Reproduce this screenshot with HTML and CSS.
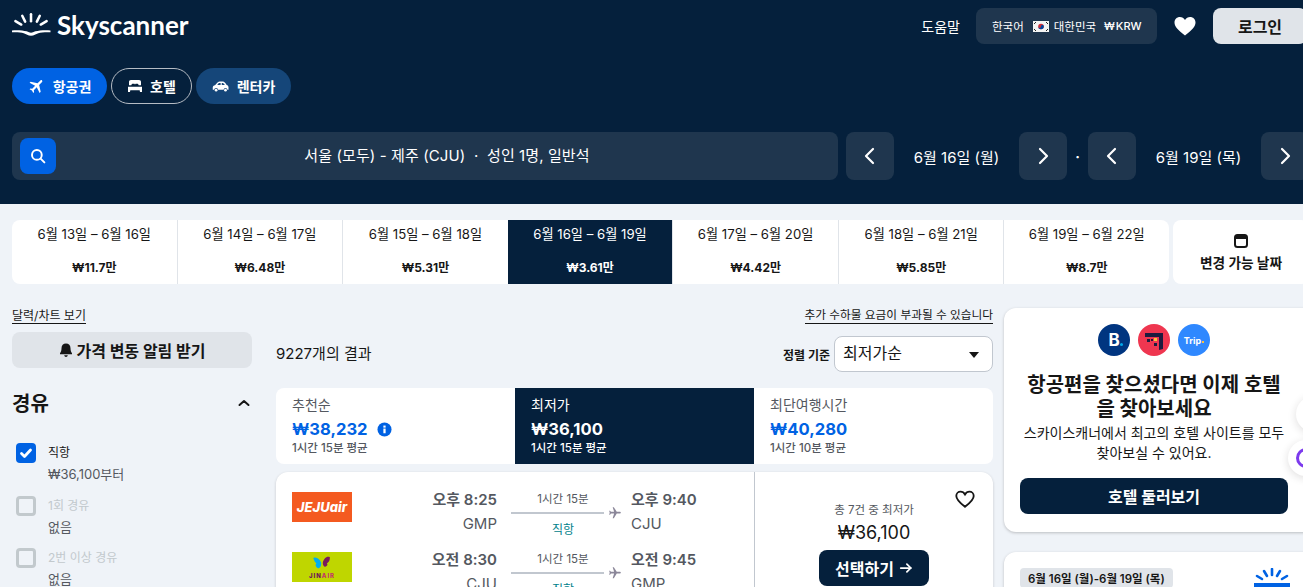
FILE: index.html
```html
<!DOCTYPE html>
<html lang="ko">
<head>
  <meta charset="UTF-8">
  <title>Skyscanner</title>
  <link rel="stylesheet" href="styles.css">
</head>
<body>

  <header class="topbar">
    <div class="toprow">
      <a class="logo" href="#">
        <svg class="logo-mark" viewBox="0 0 40 28" width="39" height="28">
          <g fill="none" stroke="#fff" stroke-width="2.6" stroke-linecap="round">
            <path d="M19.5 2v7"/>
            <path d="M10.500 3.500l3 6"/>
            <path d="M28.500 3.500l-3 6"/>
            <path d="M3.500 9l6 3.500"/>
            <path d="M35.500 9l-6 3.500"/>
          </g>
          <path fill="#fff" d="M0 18.500c6-.4 11.500 0 15 1 2 .6 3 1.500 4.500 1.500s2.500-.9 4.500-1.500c3.500-1 9-1.400 15.500-1V20.500c-5.500-.2-10 .2-12.500 1-2.500.8-4.500 2.500-7.500 2.500s-5-1.700-7.500-2.500c-2.500-.8-6.500-1.200-12-1z"/>
        </svg>
        <span>Skyscanner</span>
      </a>
      <div class="top-actions">
        <a class="help" href="#">도움말</a>
        <button class="locale">
          <span>한국어</span>
          <svg class="flag" viewBox="0 0 16 11" width="16" height="11">
            <rect width="16" height="11" fill="#f4f4f4"/>
            <circle cx="8" cy="5.5" r="2.8" fill="#cd2e3a"/>
            <path d="M5.2 5.500a2.800 2.800 0 0 0 5.600 0 1.400 1.400 0 0 0-2.800 0 1.400 1.400 0 0 1-2.800 0z" fill="#0047a0"/>
            <g stroke="#222" stroke-width="1">
              <path d="M1 3l2-2"/><path d="M13 1l2 2"/><path d="M1 8l2 2"/><path d="M13 10l2-2"/>
            </g>
          </svg>
          <span>대한민국</span>
          <span class="currency">₩ KRW</span>
        </button>
        <svg class="top-heart" viewBox="0 0 24 24" width="24" height="24">
          <path fill="#fff" d="M12 21.500C5 16 1.500 12.700 1.500 8.500 1.500 5.200 4 3 6.900 3c2.100 0 4 1.100 5.100 3 1.100-1.900 3-3 5.100-3 2.900 0 5.400 2.200 5.400 5.500 0 4.200-3.500 7.500-10.500 13z"/>
        </svg>
        <button class="login">로그인</button>
      </div>
    </div>

    <nav class="modes">
      <a class="mode mode-flight" href="#">
        <svg viewBox="0 0 24 24" width="18" height="18"><path class="plane-up" fill="#fff" d="M21 16v-2l-8-5V3.500C13 2.670 12.330 2 11.500 2S10 2.670 10 3.500V9l-8 5v2l8-2.500V19l-2 1.500V22l3.500-1 3.500 1v-1.500L13 19v-5.500l8 2.500z"/></svg>
        항공권
      </a>
      <a class="mode mode-hotel" href="#">
        <svg viewBox="0 0 24 24" width="16" height="16"><path fill="#fff" d="M6 3h12c2 0 3 1.200 3 3v5h-3.500c0-1.500-1-2.500-2.500-2.500h-1.500c-.8 0-1.500.8-1.500 2h0c0-1.200-.7-2-1.500-2H9c-1.500 0-2.500 1-2.500 2.500H3V6c0-1.800 1-3 3-3zM1.500 13h21v8h-3l-.5-2.500H5L4.500 21h-3z"/></svg>
        호텔
      </a>
      <a class="mode mode-car" href="#">
        <svg viewBox="0 0 24 24" width="18" height="18"><path fill="#fff" fill-rule="evenodd" d="M1 17v-3c0-1.500 1-2.500 3-3l3-3.500C8 6.500 9.500 6 11.500 6h2c2 0 3.500.7 5 3l1 1.500c1.500.5 2.500 1.500 2.500 3V17h-1.500a2.500 2.500 0 0 0-5 0H8a2.500 2.500 0 0 0-5 0zM8.500 8.500L7 10.500h4.500V8h-1c-1 0-1.500.1-2 .5zM13 8v2.500h4C16.200 8.900 15 8 13 8z"/><circle cx="5.500" cy="17.500" r="1.800" fill="#fff"/><circle cx="18" cy="17.500" r="1.800" fill="#fff"/></svg>
        렌터카
      </a>
    </nav>

    <div class="searchrow">
      <div class="searchbox">
        <span class="searchbtn">
          <svg viewBox="0 0 24 24" width="18" height="18" fill="none" stroke="#fff" stroke-width="2.6" stroke-linecap="round"><circle cx="10.5" cy="10.5" r="6.5"/><path d="M15.500 15.500l5 5"/></svg>
        </span>
        <span class="searchtext">서울 (모두) - 제주 (CJU) &nbsp;·&nbsp; 성인 1명, 일반석</span>
      </div>
      <button class="arrowbtn"><svg viewBox="0 0 24 24" width="24" height="24"><path d="M15 5l-7 7 7 7"/></svg></button>
      <span class="datelabel">6월 16일 (월)</span>
      <button class="arrowbtn"><svg viewBox="0 0 24 24" width="24" height="24"><path d="M9 5l7 7-7 7"/></svg></button>
      <span class="datedot">·</span>
      <button class="arrowbtn"><svg viewBox="0 0 24 24" width="24" height="24"><path d="M15 5l-7 7 7 7"/></svg></button>
      <span class="datelabel">6월 19일 (목)</span>
      <button class="arrowbtn"><svg viewBox="0 0 24 24" width="24" height="24"><path d="M9 5l7 7-7 7"/></svg></button>
    </div>
  </header>

  <section class="datestrip">
    <div class="datecells">
      <a class="datecell" href="#"><span>6월 13일 – 6월 16일</span><b>₩11.7만</b></a>
      <a class="datecell" href="#"><span>6월 14일 – 6월 17일</span><b>₩6.48만</b></a>
      <a class="datecell" href="#"><span>6월 15일 – 6월 18일</span><b>₩5.31만</b></a>
      <a class="datecell active" href="#"><span>6월 16일 – 6월 19일</span><b>₩3.61만</b></a>
      <a class="datecell" href="#"><span>6월 17일 – 6월 20일</span><b>₩4.42만</b></a>
      <a class="datecell" href="#"><span>6월 18일 – 6월 21일</span><b>₩5.85만</b></a>
      <a class="datecell" href="#"><span>6월 19일 – 6월 22일</span><b>₩8.7만</b></a>
    </div>
    <a class="flexdates" href="#">
      <svg viewBox="0 0 16 16" width="16" height="16"><rect x="2" y="2" width="12" height="12" rx="2.5" fill="none" stroke="#161616" stroke-width="2"/><rect x="2" y="2" width="12" height="4" fill="#161616"/></svg>
      <span>변경 가능 날짜</span>
    </a>
  </section>

  <main class="results">
    <aside class="filters">
      <a class="underlined" href="#">달력/차트 보기</a>
      <button class="alertbtn">
        <svg viewBox="0 0 16 16" width="16" height="16"><path fill="#161616" d="M8 1.500c2.800 0 4.500 2 4.500 4.700 0 2.300.6 3.700 1.500 5v1H2v-1c.9-1.300 1.500-2.700 1.500-5C3.500 3.500 5.200 1.500 8 1.500zM6.200 13.300h3.600C9.600 14.300 8.900 15 8 15s-1.600-.7-1.800-1.700z"/></svg>
        가격 변동 알림 받기
      </button>
      <div class="filter-head">
        <h3>경유</h3>
        <svg viewBox="0 0 16 16" width="16" height="16" fill="none" stroke="#161616" stroke-width="2" stroke-linecap="round" stroke-linejoin="round"><path d="M3.500 10L8 6l4.500 4"/></svg>
      </div>
      <div class="stop">
        <span class="check checked">
          <svg viewBox="0 0 20 20" width="20" height="20" fill="none" stroke="#fff" stroke-width="2.8" stroke-linecap="round" stroke-linejoin="round"><path d="M5.500 10.500l3 3 6-6.500"/></svg>
        </span>
        <div><p class="stop-name">직항</p><p class="stop-price">₩36,100부터</p></div>
      </div>
      <div class="stop">
        <span class="check"></span>
        <div><p class="stop-name off">1회 경유</p><p class="stop-price">없음</p></div>
      </div>
      <div class="stop">
        <span class="check"></span>
        <div><p class="stop-name off">2번 이상 경유</p><p class="stop-price">없음</p></div>
      </div>
    </aside>

    <section class="list">
      <div class="list-note"><a class="underlined note-link" href="#">추가 수하물 요금이 부과될 수 있습니다</a></div>
      <div class="list-head">
        <span class="count">9227개의 결과</span>
        <div class="sort">
          <label>정렬 기준</label>
          <div class="select">최저가순<i class="caret"></i></div>
        </div>
      </div>

      <div class="sorttabs">
        <div class="sorttab">
          <span class="st-label">추천순</span>
          <span class="st-price">₩38,232
            <svg viewBox="0 0 16 16" width="15" height="15"><circle cx="8" cy="8" r="7.5" fill="#0062e3"/><rect x="6.8" y="7" width="2.4" height="5" fill="#fff"/><rect x="6.8" y="3.800" width="2.4" height="2.200" fill="#fff"/></svg>
          </span>
          <span class="st-time">1시간 15분 평균</span>
        </div>
        <div class="sorttab active">
          <span class="st-label">최저가</span>
          <span class="st-price">₩36,100</span>
          <span class="st-time">1시간 15분 평균</span>
        </div>
        <div class="sorttab">
          <span class="st-label">최단여행시간</span>
          <span class="st-price">₩40,280</span>
          <span class="st-time">1시간 10분 평균</span>
        </div>
      </div>

      <article class="ticket">
        <div class="legs">
          <div class="leg">
            <div class="airline jeju">JEJUair</div>
            <div class="time-from"><b>오후 8:25</b><span>GMP</span></div>
            <div class="route">
              <span class="dur">1시간 15분</span>
              <div class="line"><i></i><svg viewBox="0 0 24 24" width="14" height="14"><path transform="rotate(90 12 12)" d="M21 16v-2l-8-5V3.500C13 2.670 12.330 2 11.500 2S10 2.670 10 3.500V9l-8 5v2l8-2.500V19l-2 1.500V22l3.500-1 3.500 1v-1.500L13 19v-5.500l8 2.500z"/></svg></div>
              <span class="direct">직항</span>
            </div>
            <div class="time-to"><b>오후 9:40</b><span>CJU</span></div>
          </div>
          <div class="leg">
            <div class="airline jin">
              <svg viewBox="0 0 30 24" width="24" height="19">
                <path fill="#00aeef" d="M14 11C12 6 8 3 4 5c1 4 3 6 4 7-2 1-1 5 2 6 3 0 4-3 4-7z"/>
                <path fill="#7a1a5e" d="M16 11c1-5 5-9 9-7 0 4-1 6-4 8 2 1 0 4-2 4-2 0-3-2-3-5z"/>
              </svg>
              <span>JIN<em>AIR</em></span>
            </div>
            <div class="time-from"><b>오전 8:30</b><span>CJU</span></div>
            <div class="route">
              <span class="dur">1시간 15분</span>
              <div class="line"><i></i><svg viewBox="0 0 24 24" width="14" height="14"><path transform="rotate(90 12 12)" d="M21 16v-2l-8-5V3.500C13 2.670 12.330 2 11.500 2S10 2.670 10 3.500V9l-8 5v2l8-2.500V19l-2 1.500V22l3.500-1 3.500 1v-1.500L13 19v-5.500l8 2.500z"/></svg></div>
              <span class="direct">직항</span>
            </div>
            <div class="time-to"><b>오전 9:45</b><span>GMP</span></div>
          </div>
        </div>
        <div class="buy">
          <svg class="buy-heart" viewBox="0 0 24 24" width="22" height="22"><path fill="none" stroke="#161616" stroke-width="2" d="M12 20.500C5.500 15.500 2.500 12.500 2.500 8.700 2.500 5.800 4.700 4 7.100 4c2 0 3.800 1.100 4.900 3 1.100-1.900 2.900-3 4.900-3 2.400 0 4.600 1.800 4.600 4.700 0 3.800-3 6.800-9.500 11.800z"/></svg>
          <span class="buy-note">총 7건 중 최저가</span>
          <span class="buy-price">₩36,100</span>
          <button class="select-btn">선택하기
            <svg viewBox="0 0 16 16" width="14" height="14" fill="none" stroke="#fff" stroke-width="2" stroke-linecap="round" stroke-linejoin="round"><path d="M2 8h11.500"/><path d="M9 3.500L13.500 8 9 12.500"/></svg>
          </button>
        </div>
      </article>
    </section>

    <aside class="side">
      <div class="promo">
        <div class="partners">
          <span class="partner booking">B<i></i></span>
          <span class="partner agoda">
            <svg viewBox="0 0 32 32" width="32" height="32">
              <path fill="#1d1b3f" d="M7 9h18v16l-4 1V13H7z"/>
              <rect x="9" y="15" width="3" height="3" fill="#1d1b3f"/>
              <rect x="13" y="15" width="2" height="2" fill="#1d1b3f"/>
              <rect x="16" y="14" width="3" height="3" fill="#f9c23c"/>
              <rect x="16" y="19" width="3" height="3" fill="#1d1b3f"/>
            </svg>
          </span>
          <span class="partner trip">Trip<i></i></span>
        </div>
        <h2>항공편을 찾으셨다면 이제 호텔을 찾아보세요</h2>
        <p>스카이스캐너에서 최고의 호텔 사이트를 모두 찾아보실 수 있어요.</p>
        <button class="promo-btn">호텔 둘러보기</button>
      </div>
      <div class="hotel-card">
        <span class="date-tag">6월 16일 (월)-6월 19일 (목)</span>
        <svg class="sun" viewBox="0 0 36 24" width="36" height="24">
          <g fill="none" stroke="#0062e3" stroke-width="2.6" stroke-linecap="round">
            <path d="M18 1v6"/><path d="M10 3l3 5"/><path d="M26 3l-3 5"/><path d="M3 8l5 3"/><path d="M33 8l-5 3"/>
          </g>
          <path fill="#0062e3" d="M0 15h36v9H0z"/>
        </svg>
      </div>
    </aside>
  </main>

  <span class="float-btn float-top"></span>
  <span class="float-btn float-ai"><i></i></span>

</body>
</html>
```

FILE: styles.css
```css
* {
  box-sizing: border-box;
}

html, body {
  height: 587px;
  overflow: hidden;
}

body {
  margin: 0;
  width: 1303px;
  position: relative;
  font-family: Inter, "Noto Sans CJK KR", sans-serif;
  background: #eff3f8;
  color: #161616;
  font-size: 14px;
}

a {
  color: inherit;
  text-decoration: none;
}

button {
  font-family: inherit;
  border: none;
  cursor: pointer;
}

p, h2, h3 {
  margin: 0;
}

/* header */
.topbar {
  height: 204px;
  background: #05203c;
  color: #fff;
  padding: 8px 0 0 12px;
}

.toprow {
  display: flex;
  justify-content: space-between;
  align-items: flex-start;
  height: 60px;
}

.logo {
  display: flex;
  align-items: center;
  gap: 6px;
  height: 36px;
  font-family: Lato, sans-serif;
  font-size: 26px;
  font-weight: 700;
}

.logo span {
  margin-top: -2px;
}

.top-actions {
  display: flex;
  align-items: center;
  height: 36px;
  margin-right: -4px;
}

.help {
  margin-right: 16px;
}

.locale {
  display: flex;
  align-items: center;
  flex: none;
  height: 36px;
  width: 181px;
  padding: 0 16px;
  border-radius: 8px;
  background: #1f364e;
  color: #fff;
  font-size: 11.5px;
  white-space: nowrap;
}

.flag {
  flex: none;
  margin: 0 5px 0 9px;
}

.currency {
  margin-left: 8px;
  font-size: 11px;
  font-weight: 500;
  word-spacing: -2px;
}

.top-heart {
  flex: none;
  margin: 0 16px;
}

.login {
  flex: none;
  width: 94px;
  height: 36px;
  border-radius: 8px;
  background: #e0e4e9;
  color: #161616;
  font-size: 16px;
  font-weight: 700;
}

.modes {
  display: flex;
  gap: 4px;
  height: 36px;
}

.mode {
  display: flex;
  align-items: center;
  justify-content: center;
  gap: 7px;
  border-radius: 18px;
  font-weight: 700;
}

.mode-flight {
  width: 95px;
  background: #0062e3;
}

.plane-up {
  transform: rotate(45deg);
  transform-origin: center;
}

.mode-hotel {
  width: 81px;
  border: 1px solid #b6bcc4;
}

.mode-car {
  width: 95px;
  background: #154679;
}

.searchrow {
  display: flex;
  align-items: center;
  margin-top: 28px;
  width: 1300px;
}

.searchbox {
  position: relative;
  display: flex;
  align-items: center;
  justify-content: center;
  flex: none;
  width: 826px;
  height: 48px;
  margin-right: 8px;
  padding: 0 0 4px 44px;
  border-radius: 8px;
  background: #1f364e;
  font-size: 15px;
  letter-spacing: 0.1px;
}

.searchbtn {
  position: absolute;
  left: 8px;
  top: 6px;
  display: flex;
  align-items: center;
  justify-content: center;
  width: 36px;
  height: 36px;
  border-radius: 8px;
  background: #0062e3;
}

.arrowbtn {
  display: flex;
  align-items: center;
  justify-content: center;
  flex: none;
  width: 48px;
  height: 48px;
  padding: 0;
  border-radius: 8px;
  background: #1f364e;
}

.arrowbtn path {
  fill: none;
  stroke: #fff;
  stroke-width: 2.2;
  stroke-linecap: round;
  stroke-linejoin: round;
}

.datelabel {
  flex: none;
  width: 125px;
  text-align: center;
  font-size: 15px;
}

.datedot {
  flex: none;
  width: 21px;
  text-align: center;
  font-weight: 700;
}

/* date strip */
.datestrip {
  display: flex;
  gap: 4px;
  margin: 16px 0 0 12px;
  height: 64px;
}

.datecells {
  display: flex;
  flex: none;
  width: 1157px;
  border-radius: 8px;
  background: #fff;
  overflow: hidden;
}

.datecell {
  flex: 1;
  display: flex;
  flex-direction: column;
  align-items: center;
  justify-content: space-between;
  padding: 4px 0 9px;
  border-left: 1px solid #e0e4e9;
  font-size: 13.2px;
}

.datecell:first-child {
  border-left: none;
}

.datecell.active {
  background: #05203c;
  color: #fff;
  border-left: none;
}

.datecell b {
  font-size: 12px;
}

.flexdates {
  display: flex;
  flex-direction: column;
  align-items: center;
  justify-content: center;
  gap: 3px;
  flex: none;
  width: 136px;
  border-radius: 8px;
  background: #fff;
  font-weight: 700;
  font-size: 13.7px;
}

/* results */
.results {
  display: grid;
  grid-template-columns: 240px 741px 320px;
  margin: 24px 0 0 12px;
}

.underlined {
  display: block;
  width: fit-content;
  font-size: 12px;
  line-height: 15px;
  border-bottom: 1px solid #161616;
}

.note-link {
  margin-left: auto;
  font-size: 11.7px;
}

.alertbtn {
  display: flex;
  align-items: center;
  justify-content: center;
  gap: 2px;
  width: 240px;
  height: 36px;
  margin-top: 8px;
  border-radius: 8px;
  background: #e0e4e9;
  color: #161616;
  font-size: 16px;
  font-weight: 700;
}

.filter-head {
  display: flex;
  justify-content: space-between;
  align-items: center;
  margin: 20px 0 26px;
}

.filter-head h3 {
  font-size: 20px;
  font-weight: 700;
}

.stop {
  display: flex;
  gap: 12px;
  height: 52.5px;
  padding-left: 4px;
}

.check {
  flex: none;
  width: 20px;
  height: 20px;
  border: 3px solid #c2c9cd;
  border-radius: 4px;
}

.check.checked {
  border: none;
  background: #0062e3;
}

.stop-name {
  font-size: 12px;
  line-height: 20px;
}

.stop-name.off {
  color: #c2c9cd;
}

.stop-price {
  margin-top: 1px;
  font-size: 13px;
  line-height: 20px;
  color: #545860;
}

.list {
  margin-left: 24px;
  width: 717px;
}

.list-note {
  height: 24px;
}

.list-head {
  display: flex;
  justify-content: space-between;
  align-items: center;
  margin-top: 4px;
  height: 36px;
}

.count {
  margin-top: -3px;
  font-size: 15px;
}

.sort {
  display: flex;
  align-items: center;
  gap: 4px;
}

.sort label {
  font-size: 12px;
  font-weight: 700;
}

.select {
  position: relative;
  width: 159px;
  height: 36px;
  padding: 3px 8px;
  border: 1px solid #c1c7cf;
  border-radius: 8px;
  background: #fff;
  font-size: 16px;
}

.caret {
  position: absolute;
  right: 13px;
  top: 15px;
  border: 5px solid transparent;
  border-top: 6px solid #161616;
  border-bottom: none;
}

.sorttabs {
  display: grid;
  grid-template-columns: repeat(3, 1fr);
  margin-top: 16px;
  height: 76px;
  border-radius: 8px;
  background: #fff;
  overflow: hidden;
}

.sorttab {
  display: flex;
  flex-direction: column;
  padding: 7px 16px;
}

.sorttab.active {
  background: #05203c;
  color: #fff;
}

.st-label {
  margin-bottom: 4px;
  color: #545860;
  font-size: 14px;
  line-height: 19px;
}

.st-price {
  display: flex;
  align-items: center;
  gap: 9px;
  color: #0062e3;
  font-size: 16.6px;
  font-weight: 700;
  line-height: 22px;
}

.st-time {
  color: #545860;
  font-size: 11.5px;
  font-weight: 500;
  line-height: 16px;
}

.sorttab.active .st-label,
.sorttab.active .st-price,
.sorttab.active .st-time {
  color: #fff;
}

.ticket {
  display: flex;
  height: 200px;
  margin-top: 8px;
  border-radius: 12px;
  background: #fff;
  box-shadow: 0 1px 3px rgba(37, 32, 31, 0.2);
}

.legs {
  width: 478px;
  padding: 18px 16px 0;
}

.leg {
  display: grid;
  grid-template-columns: 60px 145px 134px 1fr;
  height: 60px;
}

.airline {
  width: 60px;
  height: 30px;
  margin-top: 2px;
}

.jeju {
  background: #f45a20;
  color: #fff;
  font-size: 13px;
  font-weight: 800;
  font-style: italic;
  line-height: 30px;
  text-align: center;
}

.jin {
  display: flex;
  flex-direction: column;
  align-items: center;
  background: #bfd600;
  color: #6d1559;
  font-size: 6px;
  font-weight: 800;
  line-height: 7px;
  letter-spacing: 1px;
}

.jin svg {
  margin-top: 2px;
  margin-bottom: -1px;
}

.jin em {
  color: #c2356a;
  font-style: normal;
}

.time-from, .time-to {
  display: flex;
  flex-direction: column;
  padding-top: 1px;
  color: #545860;
}

.time-from {
  align-items: flex-end;
}

.time-from b, .time-to b {
  font-size: 15px;
  font-weight: 600;
  line-height: 18px;
}

.time-from span, .time-to span {
  margin-top: 3px;
  font-size: 15px;
  line-height: 24px;
}

.route {
  display: flex;
  flex-direction: column;
  align-items: center;
  padding: 0 10px 0 14px;
}

.dur {
  margin-right: 6px;
  font-size: 11.5px;
  line-height: 18px;
  color: #545860;
}

.line {
  display: flex;
  align-items: center;
  gap: 4px;
  height: 14px;
  margin-top: -2px;
  fill: #8b8799;
}

.line i {
  display: block;
  width: 93px;
  height: 2px;
  background: #c1c7cf;
}

.direct {
  margin: 2px 6px 0 0;
  font-size: 12px;
  line-height: 16px;
  color: #00828b;
}

.buy {
  position: relative;
  flex: 1;
  display: flex;
  flex-direction: column;
  align-items: center;
  padding-top: 29px;
  border-left: 1px solid #c1c7cf;
}

.buy-heart {
  position: absolute;
  right: 17px;
  top: 16px;
}

.buy-note {
  font-size: 11.5px;
  line-height: 18px;
  color: #545860;
}

.buy-price {
  margin-top: 1px;
  font-size: 18px;
  line-height: 26px;
}

.select-btn {
  display: flex;
  align-items: center;
  justify-content: center;
  flex: none;
  gap: 5px;
  width: 110px;
  height: 36px;
  margin-top: 4px;
  border-radius: 8px;
  background: #05203c;
  color: #fff;
  font-size: 16px;
  font-weight: 700;
}

/* right column */
.side {
  margin-left: 11px;
  width: 320px;
}

.promo {
  height: 224px;
  padding: 16px 36px 16px 16px;
  border-radius: 12px;
  background: #fff;
  box-shadow: 0 1px 3px rgba(37, 32, 31, 0.25);
  text-align: center;
}

.partners {
  display: flex;
  justify-content: center;
  gap: 8px;
}

.partner {
  position: relative;
  display: flex;
  align-items: center;
  justify-content: center;
  width: 32px;
  height: 32px;
  border-radius: 50%;
  overflow: hidden;
  color: #fff;
  font-weight: 700;
}

.booking {
  background: #003580;
  font-size: 17px;
}

.booking i {
  position: absolute;
  left: 22px;
  top: 19px;
  width: 3px;
  height: 3px;
  border-radius: 50%;
  background: #00a8e8;
}

.agoda {
  background: #ef3650;
}

.trip {
  background: #2f88ff;
  font-size: 9px;
}

.trip i {
  width: 2px;
  height: 2px;
  margin: 4px 0 0 1px;
  background: #f9c23c;
}

.promo h2 {
  margin-top: 17px;
  font-size: 20px;
  font-weight: 700;
  line-height: 24px;
}

.promo p {
  margin-top: 2px;
  font-size: 14px;
  line-height: 20px;
  word-break: keep-all;
}

.promo-btn {
  width: 268px;
  height: 36px;
  margin-top: 15px;
  border-radius: 8px;
  background: #05203c;
  color: #fff;
  font-size: 16px;
  font-weight: 700;
}

.hotel-card {
  position: relative;
  height: 120px;
  margin-top: 20px;
  padding: 16px;
  border-radius: 12px;
  background: #fff;
  box-shadow: 0 1px 3px rgba(37, 32, 31, 0.25);
}

.date-tag {
  display: inline-block;
  padding: 2px 8px;
  border-radius: 4px;
  background: #e0e4e9;
  font-size: 11.5px;
  font-weight: 600;
}

.sun {
  position: absolute;
  left: 250px;
  top: 16px;
}

/* floating buttons on the right edge */
.float-btn {
  position: absolute;
  border-radius: 50%;
  background: #fff;
  box-shadow: 0 2px 8px rgba(37, 32, 31, 0.15);
}

.float-top {
  left: 1296px;
  top: 396px;
  width: 36px;
  height: 36px;
}

.float-ai {
  left: 1288px;
  top: 440px;
  width: 36px;
  height: 36px;
}

.float-ai i {
  position: absolute;
  left: 8px;
  top: 8px;
  width: 20px;
  height: 20px;
  border: 3px solid #7c3aed;
  border-radius: 50%;
}
```
